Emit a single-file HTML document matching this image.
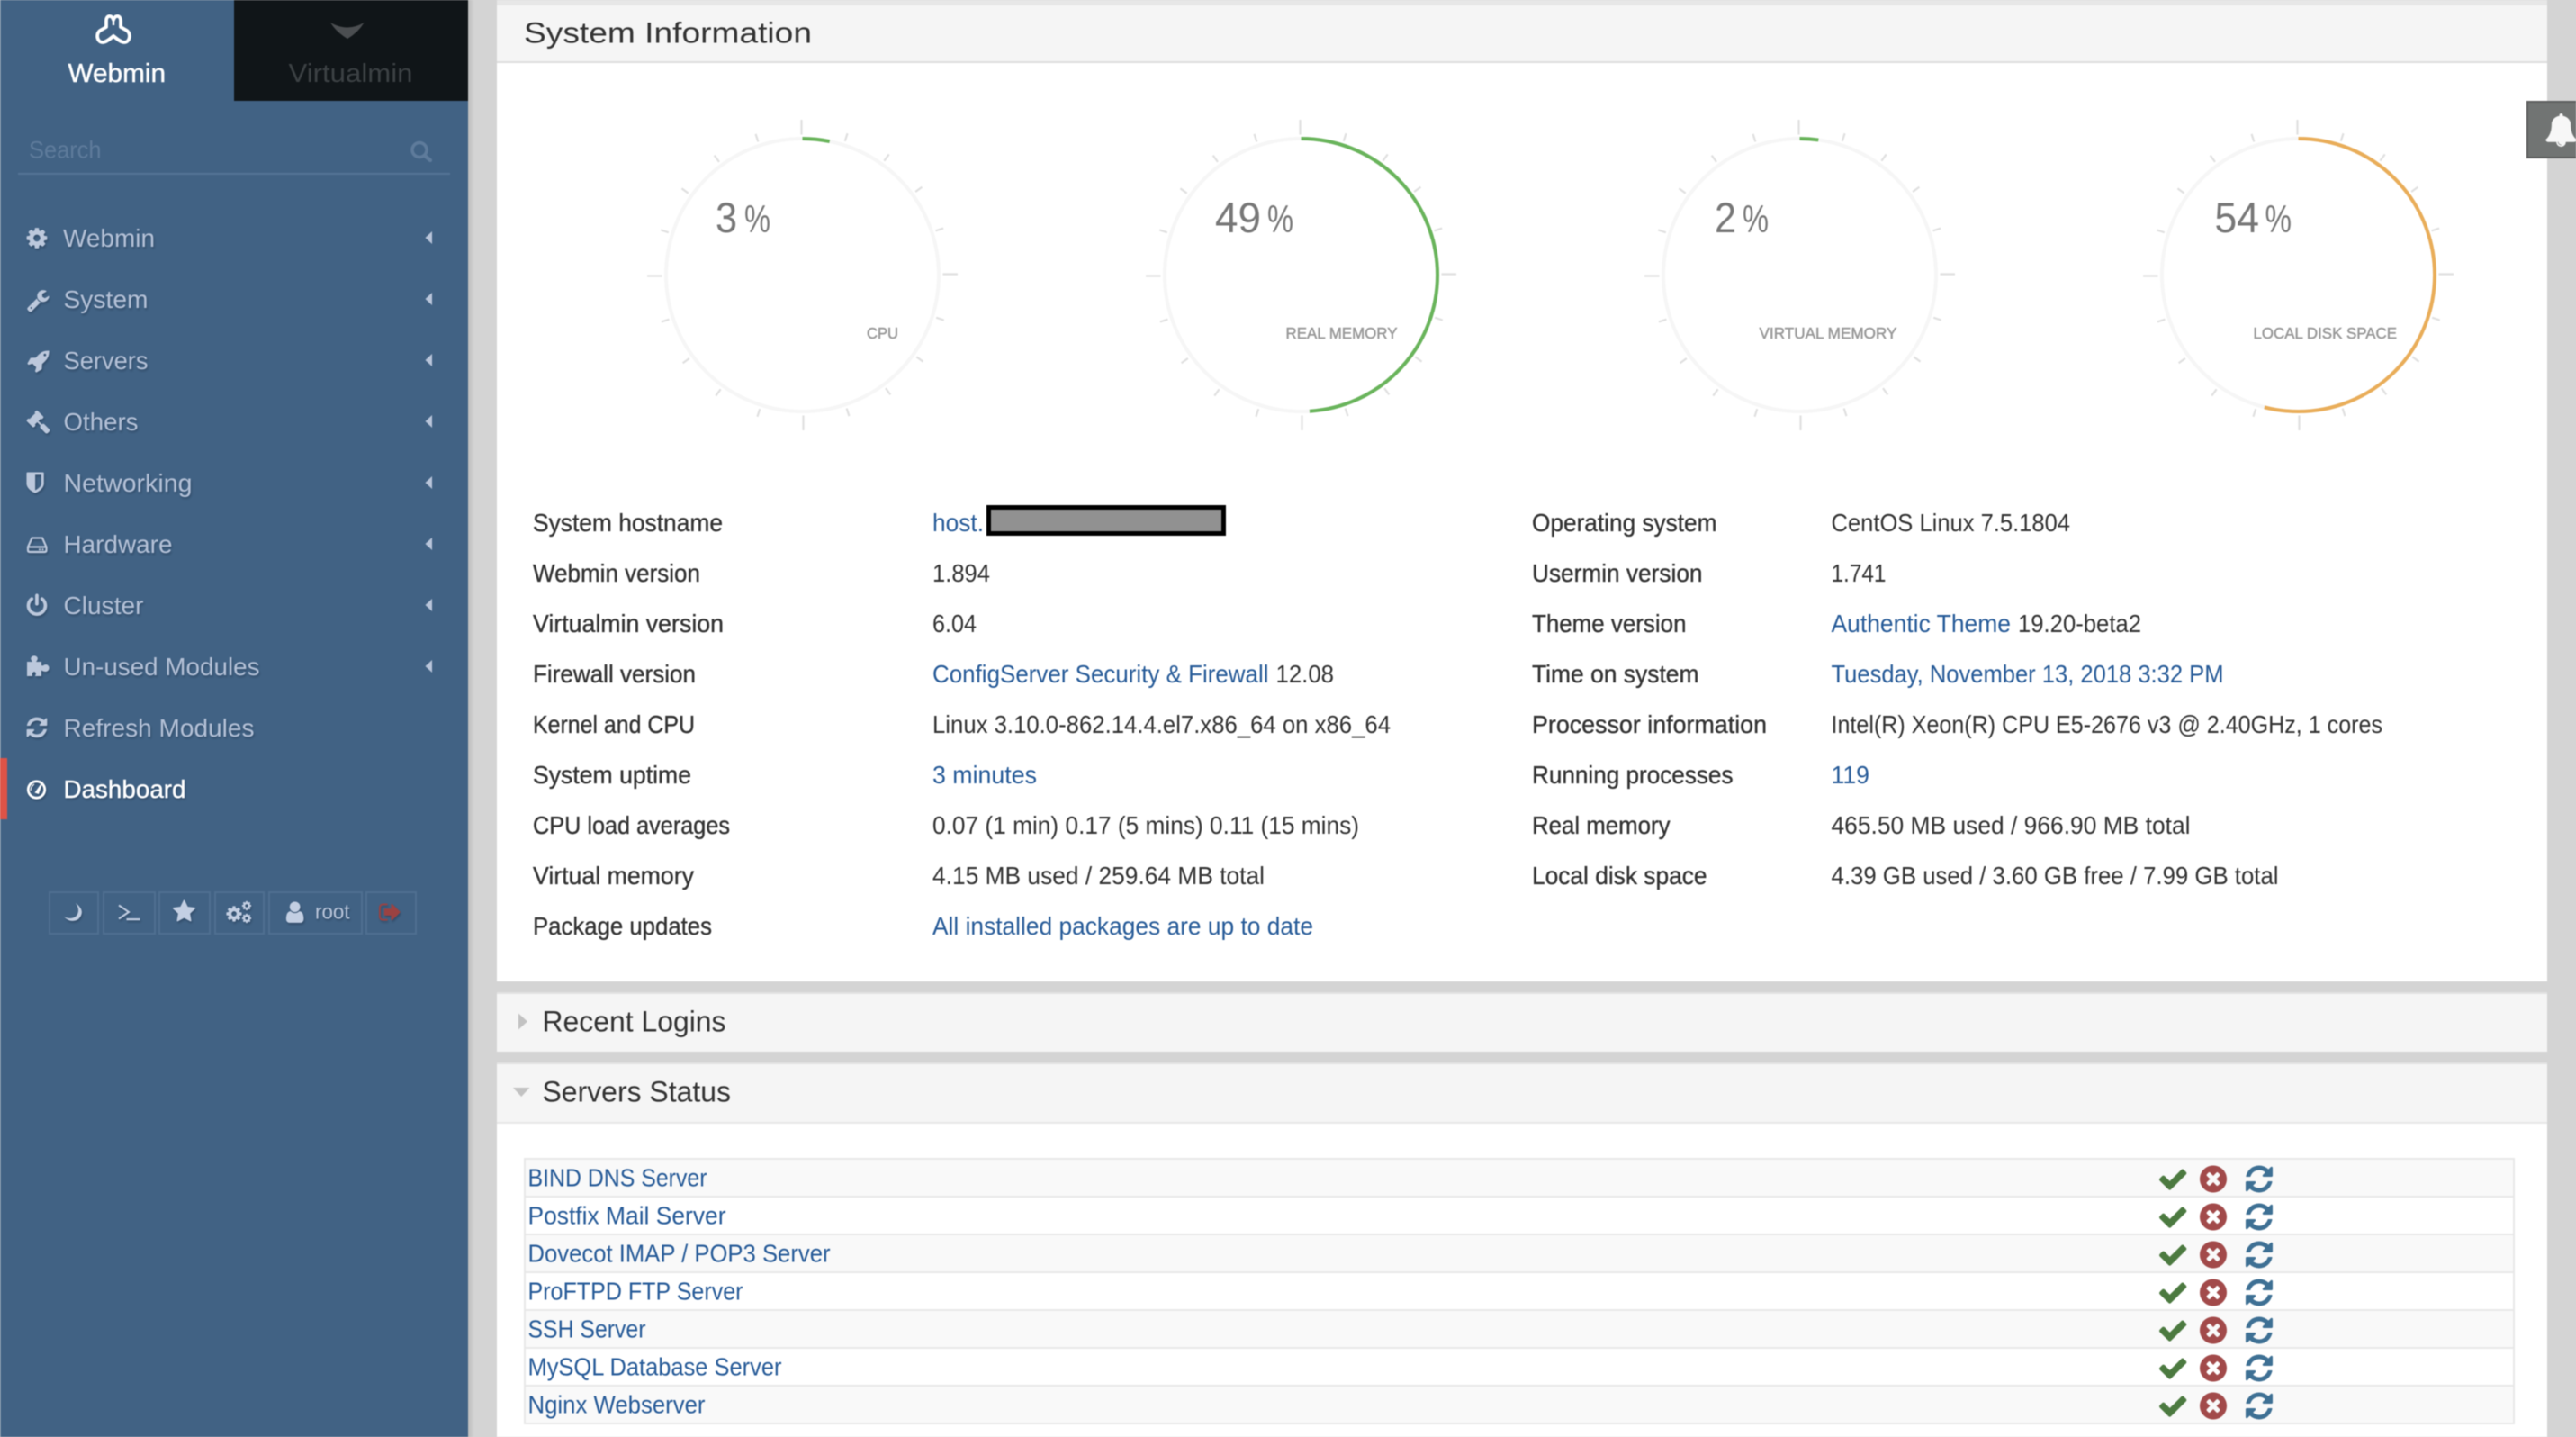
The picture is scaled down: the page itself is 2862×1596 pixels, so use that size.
<!DOCTYPE html>
<html lang="en"><head><meta charset="utf-8"><title>Webmin Dashboard</title>
<style>
html,body{margin:0;padding:0;background:#d4d4d4;overflow:hidden}
svg{display:block;filter:blur(.45px)}
text{font-family:"Liberation Sans",sans-serif;white-space:pre}
.l{font-size:27.5px;fill:#333;stroke:#333;stroke-width:.35px}
.v{font-size:27.5px;fill:#333}
.a{font-size:27.5px;fill:#275b98}
.m{font-size:28px;fill:#b4c1d7}
.t{font-size:32px;fill:#333}
.n{font-size:47px;fill:#777}
.p{font-size:43px;fill:#777}
.g{font-size:17.5px;fill:#999;stroke:#999;stroke-width:.5px}
.i{fill:#bcc8dc}
</style></head><body>
<svg xmlns="http://www.w3.org/2000/svg" width="2862" height="1596" viewBox="0 0 2862 1596">
<defs>
<symbol id="cog" viewBox="0 0 1792 1792"><path d="M1152 896q0-106-75-181t-181-75-181 75-75 181 75 181 181 75 181-75 75-181zm512-109v222q0 12-8 23t-20 13l-185 28q-19 54-39 91 35 50 107 138 10 12 10 25t-9 23q-27 37-99 108t-94 71q-12 0-26-9l-138-108q-44 23-91 38-16 136-29 186-7 28-36 28h-222q-14 0-24.5-8.5t-11.5-21.5l-28-184q-49-16-90-37l-141 107q-10 9-25 9-14 0-25-11-126-114-165-168-7-10-7-23 0-12 8-23 15-21 51-66.5t54-70.5q-27-50-41-99l-183-27q-13-2-21-12.5t-8-23.5v-222q0-12 8-23t19-13l186-28q14-46 39-92-40-57-107-138-10-12-10-24 0-10 9-23 26-36 98.5-107.5t94.5-71.5q13 0 26 10l138 107q44-23 91-38 16-136 29-186 7-28 36-28h222q14 0 24.5 8.5t11.5 21.5l28 184q49 16 90 37l142-107q9-9 24-9 13 0 25 10 129 119 165 170 7 8 7 22 0 12-8 23-15 21-51 66.5t-54 70.5q26 50 41 98l183 28q13 2 21 12.5t8 23.5z"/></symbol>
<symbol id="wrench" viewBox="0 0 1792 1792"><path d="M448 1472q0-26-19-45t-45-19-45 19-19 45 19 45 45 19 45-19 19-45zm644-420l-682 682q-37 37-90 37-52 0-91-37l-106-108q-38-36-38-90 0-53 38-91l681-681q39 98 114.5 173.5t173.5 114.5zm634-435q0 39-23 106-47 134-164.5 217.5t-258.5 83.5q-185 0-316.5-131.5t-131.5-316.5 131.5-316.5 316.5-131.5q58 0 121.5 16.5t107.5 46.5q16 11 16 28t-16 28l-293 169v224l193 107q5-3 79-48.5t135.5-81 70.5-35.5q15 0 23.5 10t8.5 25z"/></symbol>
<symbol id="rocket" viewBox="0 0 1792 1792"><path d="M1504 448q0-40-28-68t-68-28-68 28-28 68 28 68 68 28 68-28 28-68zm224-288q0 249-75.5 430.5t-253.5 360.5q-81 80-195 176l-20 379q-2 16-16 26l-384 224q-7 4-16 4-12 0-23-9l-64-64q-13-14-8-32l85-276-281-281-276 85q-3 1-9 1-14 0-23-9l-64-64q-17-19-5-39l224-384q10-14 26-16l379-20q96-114 176-195 188-187 358-258t431-71q14 0 24 9.5t10 22.5z"/></symbol>
<symbol id="gavel" viewBox="0 0 1792 1792"><path d="M1771 1536q0 53-37 90l-107 108q-39 37-91 37-53 0-90-37l-363-364q-38-36-38-90 0-53 43-96l-256-256-126 126q-14 14-34 14t-34-14q2 2 12.5 12t12.5 13 10 11.5 10 13.5 6 13.5 5.5 16.5 1.5 18q0 38-28 68-3 3-16.5 18t-19 20.5-18.5 16.5-22 15.5-22 9-26 4.5q-40 0-68-28l-408-408q-28-28-28-68 0-13 4.5-26t9-22 15.5-22 16.5-18.5 20.5-19 18-16.5q30-28 68-28 10 0 18 1.5t16.5 5.5 13.5 6 13.5 10 11.5 10 13 12.5 12 12.5q-14-14-14-34t14-34l348-348q14-14 34-14t34 14q-2-2-12.5-12t-12.5-13-10-11.5-10-13.5-6-13.5-5.5-16.5-1.5-18q0-38 28-68 3-3 16.5-18t19-20.5 18.5-16.5 22-15.5 22-9 26-4.5q40 0 68 28l408 408q28 28 28 68 0 13-4.5 26t-9 22-15.5 22-16.5 18.5-20.5 19-18 16.5q-30 28-68 28-10 0-18-1.5t-16.5-5.5-13.5-6-13.5-10-11.5-10-13-12.5-12-12.5q14 14 14 34t-14 34l-126 126 256 256q43-43 96-43 52 0 91 37l363 363q37 39 37 91z"/></symbol>
<symbol id="shield" viewBox="0 0 1792 1792"><path d="M1344 960v-640h-448v1137q119-63 213-137 235-184 235-360zm192-768v768q0 86-33.5 170.5t-83 150-118 127.5-126.5 103-121 77.5-89.5 49.5-42.5 20q-12 6-26 6t-26-6q-16-7-42.5-20t-89.5-49.5-121-77.5-126.5-103-118-127.5-83-150-33.5-170.5v-768q0-26 19-45t45-19h1152q26 0 45 19t19 45z"/></symbol>
<symbol id="power" viewBox="0 0 1792 1792"><path d="M1664 896q0 156-61 298t-164 245-245 164-298 61-298-61-245-164-164-245-61-298q0-182 80.5-343t226.5-270q43-32 95.5-25t83.5 50q32 42 24.5 94.5t-49.5 84.5q-98 74-151.5 181t-53.5 228q0 104 40.5 198.5t109.5 163.5 163.5 109.5 198.5 40.5 198.5-40.5 163.5-109.5 109.5-163.5 40.5-198.5q0-121-53.5-228t-151.5-181q-42-32-49.5-84.5t24.5-94.5q31-43 84-50t95 25q146 109 226.5 270t80.5 343zm-640-768v640q0 52-38 90t-90 38-90-38-38-90v-640q0-52 38-90t90-38 90 38 38 90z"/></symbol>
<symbol id="refresh" viewBox="0 0 1792 1792"><path d="M1639 1056q0 5-1 7-64 268-268 434.5t-478 166.5q-146 0-282.5-55t-243.5-157l-129 129q-19 19-45 19t-45-19-19-45v-448q0-26 19-45t45-19h448q26 0 45 19t19 45-19 45l-137 137q71 66 161 102t187 36q134 0 250-65t186-179q11-17 53-117 8-23 30-23h192q13 0 22.5 9.5t9.5 22.5zm25-800v448q0 26-19 45t-45 19h-448q-26 0-45-19t-19-45 19-45l138-138q-148-137-349-137-134 0-250 65t-186 179q-11 17-53 117-8 23-30 23h-199q-13 0-22.5-9.5t-9.5-22.5v-7q65-268 270-434.5t480-166.5q146 0 284 55.5t245 156.5l130-129q19-19 45-19t45 19 19 45z"/></symbol>
<symbol id="check" viewBox="0 0 1792 1792"><path d="M1671 566q0 40-28 68l-724 724-136 136q-28 28-68 28t-68-28l-136-136-362-362q-28-28-28-68t28-68l136-136q28-28 68-28t68 28l294 295 656-657q28-28 68-28t68 28l136 136q28 28 28 68z"/></symbol>
<symbol id="times" viewBox="0 0 1792 1792"><path d="M1277 1122q0-26-19-45l-181-181 181-181q19-19 19-45 0-27-19-46l-90-90q-19-19-46-19-26 0-45 19l-181 181-181-181q-19-19-45-19-27 0-46 19l-90 90q-19 19-19 46 0 26 19 45l181 181-181 181q-19 19-19 45 0 27 19 46l90 90q19 19 46 19 26 0 45-19l181-181 181 181q19 19 45 19 27 0 46-19l90-90q19-19 19-46zm387-226q0 209-103 385.5t-279.5 279.5-385.5 103-385.5-103-279.5-279.5-103-385.5 103-385.5 279.5-279.5 385.5-103 385.5 103 279.5 279.5 103 385.5z"/></symbol>
<symbol id="star" viewBox="0 0 1792 1792"><path d="M1728 647q0 22-26 48l-363 354 86 500q1 7 1 20 0 21-10.5 35.5t-30.5 14.5q-19 0-40-12l-449-236-449 236q-22 12-40 12-21 0-31.5-14.5t-10.5-35.5q0-6 2-20l86-500-364-354q-25-27-25-48 0-37 56-46l502-73 225-455q19-41 49-41t49 41l225 455 502 73q56 9 56 46z"/></symbol>
<symbol id="user" viewBox="0 0 1792 1792"><path d="M1536 1399q0 109-62.5 187t-150.5 78h-854q-88 0-150.5-78t-62.5-187q0-85 8.5-160.5t31.5-152 58.5-131 94-89 134.5-34.5q131 128 313 128t313-128q76 0 134.5 34.5t94 89 58.5 131 31.5 152 8.5 160.5zm-256-887q0 159-112.5 271.5t-271.5 112.5-271.5-112.5-112.5-271.5 112.5-271.5 271.5-112.5 271.5 112.5 112.5 271.5z"/></symbol>
<symbol id="signout" viewBox="0 0 1792 1792"><path d="M704 1440q0 4 1 20t.5 26.5-3 23.5-10 19.5-20.5 6.5h-320q-119 0-203.5-84.5t-84.5-203.5v-704q0-119 84.5-203.5t203.5-84.5h320q13 0 22.5 9.5t9.5 22.5q0 4 1 20t.5 26.5-3 23.5-10 19.5-20.5 6.5h-320q-66 0-113 47t-47 113v704q0 66 47 113t113 47h312l11.5 1 11.5 3 8 5.5 7 9 2 13.5zm928-544q0 26-19 45l-544 544q-19 19-45 19t-45-19-19-45v-288h-448q-26 0-45-19t-19-45v-384q0-26 19-45t45-19h448v-288q0-26 19-45t45-19 45 19l544 544q19 19 19 45z"/></symbol>
<symbol id="bell" viewBox="0 0 1792 1792"><path d="M912 1696q0-16-16-16-59 0-101.5-42.5t-42.5-101.5q0-16-16-16t-16 16q0 73 51.5 124.5t124.5 51.5q16 0 16-16zm816-288q0 52-38 90t-90 38h-448q0 106-75 181t-181 75-181-75-75-181h-448q-52 0-90-38t-38-90q50-42 91-88t85-119.5 74.5-158.5 50-206 19.5-260q0-152 117-282.5t307-158.5q-8-19-8-39 0-40 28-68t68-28 68 28 28 68q0 20-8 39 190 28 307 158.5t117 282.5q0 139 19.5 260t50 206 74.5 158.5 85 119.5 91 88z"/></symbol>
<g id="ticks" fill="none">
<circle r="151.5" stroke="#f6f6f6" stroke-width="4"/>
<g stroke="#e0e0e0" stroke-width="2.2">
<line x1="-1" y1="-156" x2="-1" y2="-172.5"/>
<line x1="-1" y1="-156" x2="-1" y2="-165" transform="rotate(18)"/>
<line x1="-1" y1="-156" x2="-1" y2="-165" transform="rotate(36)"/>
<line x1="-1" y1="-156" x2="-1" y2="-165" transform="rotate(54)"/>
<line x1="-1" y1="-156" x2="-1" y2="-165" transform="rotate(72)"/>
<line x1="-1" y1="-156" x2="-1" y2="-172.5" transform="rotate(90)"/>
<line x1="-1" y1="-156" x2="-1" y2="-165" transform="rotate(108)"/>
<line x1="-1" y1="-156" x2="-1" y2="-165" transform="rotate(126)"/>
<line x1="-1" y1="-156" x2="-1" y2="-165" transform="rotate(144)"/>
<line x1="-1" y1="-156" x2="-1" y2="-165" transform="rotate(162)"/>
<line x1="-1" y1="-156" x2="-1" y2="-172.5" transform="rotate(180)"/>
<line x1="-1" y1="-156" x2="-1" y2="-165" transform="rotate(198)"/>
<line x1="-1" y1="-156" x2="-1" y2="-165" transform="rotate(216)"/>
<line x1="-1" y1="-156" x2="-1" y2="-165" transform="rotate(234)"/>
<line x1="-1" y1="-156" x2="-1" y2="-165" transform="rotate(252)"/>
<line x1="-1" y1="-156" x2="-1" y2="-172.5" transform="rotate(270)"/>
<line x1="-1" y1="-156" x2="-1" y2="-165" transform="rotate(288)"/>
<line x1="-1" y1="-156" x2="-1" y2="-165" transform="rotate(306)"/>
<line x1="-1" y1="-156" x2="-1" y2="-165" transform="rotate(324)"/>
<line x1="-1" y1="-156" x2="-1" y2="-165" transform="rotate(342)"/>
</g>
</g>
<linearGradient id="sh" x1="0" x2="1" y1="0" y2="0"><stop offset="0" stop-color="#bdbdbd"/><stop offset="1" stop-color="#d4d4d4"/></linearGradient>
</defs>

<!-- background -->
<rect width="2862" height="1596" fill="#d4d4d4"/>
<rect x="520" y="0" width="7" height="1596" fill="url(#sh)"/>

<!-- System Information panel -->
<rect x="552" y="0" width="2278" height="6" fill="#e7e7e7"/>
<rect x="552" y="6" width="2278" height="62" fill="#f5f5f5"/>
<rect x="552" y="68" width="2278" height="2" fill="#dedede"/>
<rect x="552" y="70" width="2278" height="1020" fill="#fff"/>
<text class="t" x="582" y="47.5" textLength="320" lengthAdjust="spacingAndGlyphs">System Information</text>

<!-- gauges -->
<g transform="translate(891.5 305.5)"><use href="#ticks"/><circle r="151.5" fill="none" stroke="#69b45b" stroke-width="4" pathLength="100" stroke-dasharray="3.2 96.8" transform="rotate(-90)"/></g>
<g transform="translate(1445.5 305.5)"><use href="#ticks"/><circle r="151.5" fill="none" stroke="#69b45b" stroke-width="4" pathLength="100" stroke-dasharray="49 51" transform="rotate(-90)"/></g>
<g transform="translate(1999.5 305.5)"><use href="#ticks"/><circle r="151.5" fill="none" stroke="#69b45b" stroke-width="4" pathLength="100" stroke-dasharray="2.2 97.8" transform="rotate(-90)"/></g>
<g transform="translate(2553.5 305.5)"><use href="#ticks"/><circle r="151.5" fill="none" stroke="#e9ad59" stroke-width="4" pathLength="100" stroke-dasharray="54 46" transform="rotate(-90)"/></g>

<text class="n" x="795" y="258" textLength="24" lengthAdjust="spacingAndGlyphs">3</text>
<text class="p" x="827" y="258" textLength="29" lengthAdjust="spacingAndGlyphs">%</text>
<text class="g" x="963" y="376" textLength="35" lengthAdjust="spacingAndGlyphs">CPU</text>

<text class="n" x="1350" y="258" textLength="51" lengthAdjust="spacingAndGlyphs">49</text>
<text class="p" x="1408" y="258" textLength="29" lengthAdjust="spacingAndGlyphs">%</text>
<text class="g" x="1428.5" y="376" textLength="124" lengthAdjust="spacingAndGlyphs">REAL MEMORY</text>

<text class="n" x="1905" y="258" textLength="24" lengthAdjust="spacingAndGlyphs">2</text>
<text class="p" x="1936" y="258" textLength="29" lengthAdjust="spacingAndGlyphs">%</text>
<text class="g" x="1954.5" y="376" textLength="153" lengthAdjust="spacingAndGlyphs">VIRTUAL MEMORY</text>

<text class="n" x="2460.5" y="258" textLength="49.5" lengthAdjust="spacingAndGlyphs">54</text>
<text class="p" x="2516.5" y="258" textLength="29.5" lengthAdjust="spacingAndGlyphs">%</text>
<text class="g" x="2503.5" y="376" textLength="159.5" lengthAdjust="spacingAndGlyphs">LOCAL DISK SPACE</text>

<!-- info table left -->
<text class="l" x="592" y="590" textLength="211" lengthAdjust="spacingAndGlyphs">System hostname</text>
<text class="l" x="592" y="646" textLength="186" lengthAdjust="spacingAndGlyphs">Webmin version</text>
<text class="l" x="592" y="702" textLength="212" lengthAdjust="spacingAndGlyphs">Virtualmin version</text>
<text class="l" x="592" y="758" textLength="181" lengthAdjust="spacingAndGlyphs">Firewall version</text>
<text class="l" x="592" y="814" textLength="180" lengthAdjust="spacingAndGlyphs">Kernel and CPU</text>
<text class="l" x="592" y="870" textLength="176" lengthAdjust="spacingAndGlyphs">System uptime</text>
<text class="l" x="592" y="926" textLength="219" lengthAdjust="spacingAndGlyphs">CPU load averages</text>
<text class="l" x="592" y="982" textLength="179" lengthAdjust="spacingAndGlyphs">Virtual memory</text>
<text class="l" x="592" y="1038" textLength="199" lengthAdjust="spacingAndGlyphs">Package updates</text>

<text class="a" x="1036" y="590" textLength="57" lengthAdjust="spacingAndGlyphs">host.</text>
<rect x="1098.5" y="563.5" width="261" height="29" fill="#919191" stroke="#000" stroke-width="5"/>
<text class="v" x="1036" y="646" textLength="64" lengthAdjust="spacingAndGlyphs">1.894</text>
<text class="v" x="1036" y="702" textLength="49" lengthAdjust="spacingAndGlyphs">6.04</text>
<text class="a" x="1036" y="758" textLength="373.5" lengthAdjust="spacingAndGlyphs">ConfigServer Security &amp; Firewall</text>
<text class="v" x="1417.5" y="758" textLength="64.5" lengthAdjust="spacingAndGlyphs">12.08</text>
<text class="v" x="1036" y="814" textLength="509" lengthAdjust="spacingAndGlyphs">Linux 3.10.0-862.14.4.el7.x86_64 on x86_64</text>
<text class="a" x="1036" y="870" textLength="116" lengthAdjust="spacingAndGlyphs">3 minutes</text>
<text class="v" x="1036" y="926" textLength="474" lengthAdjust="spacingAndGlyphs">0.07 (1 min) 0.17 (5 mins) 0.11 (15 mins)</text>
<text class="v" x="1036" y="982" textLength="369" lengthAdjust="spacingAndGlyphs">4.15 MB used / 259.64 MB total</text>
<text class="a" x="1036" y="1038" textLength="423" lengthAdjust="spacingAndGlyphs">All installed packages are up to date</text>

<!-- info table right -->
<text class="l" x="1702" y="590" textLength="205.5" lengthAdjust="spacingAndGlyphs">Operating system</text>
<text class="l" x="1702" y="646" textLength="189.5" lengthAdjust="spacingAndGlyphs">Usermin version</text>
<text class="l" x="1702" y="702" textLength="171.5" lengthAdjust="spacingAndGlyphs">Theme version</text>
<text class="l" x="1702" y="758" textLength="185.5" lengthAdjust="spacingAndGlyphs">Time on system</text>
<text class="l" x="1702" y="814" textLength="261" lengthAdjust="spacingAndGlyphs">Processor information</text>
<text class="l" x="1702" y="870" textLength="223.5" lengthAdjust="spacingAndGlyphs">Running processes</text>
<text class="l" x="1702" y="926" textLength="153.5" lengthAdjust="spacingAndGlyphs">Real memory</text>
<text class="l" x="1702" y="982" textLength="194.5" lengthAdjust="spacingAndGlyphs">Local disk space</text>

<text class="v" x="2034.5" y="590" textLength="265.5" lengthAdjust="spacingAndGlyphs">CentOS Linux 7.5.1804</text>
<text class="v" x="2034.5" y="646" textLength="61" lengthAdjust="spacingAndGlyphs">1.741</text>
<text class="a" x="2034.5" y="702" textLength="199.5" lengthAdjust="spacingAndGlyphs">Authentic Theme</text>
<text class="v" x="2242" y="702" textLength="137" lengthAdjust="spacingAndGlyphs">19.20-beta2</text>
<text class="a" x="2034.5" y="758" textLength="436" lengthAdjust="spacingAndGlyphs">Tuesday, November 13, 2018 3:32 PM</text>
<text class="v" x="2034.5" y="814" textLength="612.5" lengthAdjust="spacingAndGlyphs">Intel(R) Xeon(R) CPU E5-2676 v3 @ 2.40GHz, 1 cores</text>
<text class="a" x="2034.5" y="870" textLength="42.5" lengthAdjust="spacingAndGlyphs">119</text>
<text class="v" x="2034.5" y="926" textLength="399" lengthAdjust="spacingAndGlyphs">465.50 MB used / 966.90 MB total</text>
<text class="v" x="2034.5" y="982" textLength="497" lengthAdjust="spacingAndGlyphs">4.39 GB used / 3.60 GB free / 7.99 GB total</text>

<!-- Recent Logins -->
<rect x="552" y="1102" width="2278" height="66" fill="#f5f5f5"/>
<rect x="552" y="1102" width="2278" height="2" fill="#e2e2e2"/>
<path d="M576 1125.5L586 1134.5L576 1143.5Z" fill="#c2c2c2"/>
<text class="t" x="602.5" y="1145.5" textLength="204" lengthAdjust="spacingAndGlyphs">Recent Logins</text>

<!-- Servers Status -->
<rect x="552" y="1180" width="2278" height="66" fill="#f5f5f5"/>
<rect x="552" y="1180" width="2278" height="2" fill="#e2e2e2"/>
<rect x="552" y="1246" width="2278" height="2" fill="#e8e8e8"/>
<rect x="552" y="1248" width="2278" height="348" fill="#fff"/>
<path d="M570 1208H588.5L579.2 1218Z" fill="#c2c2c2"/>
<text class="t" x="602.5" y="1223.5" textLength="209.5" lengthAdjust="spacingAndGlyphs">Servers Status</text>

<!-- status table -->
<rect x="583" y="1287" width="2210" height="294" fill="#fff" stroke="#e8e8e8" stroke-width="2"/>
<g fill="#f9f9f9"><rect x="584" y="1288" width="2208" height="40"/><rect x="584" y="1372" width="2208" height="40"/><rect x="584" y="1456" width="2208" height="40"/><rect x="584" y="1540" width="2208" height="40"/></g>
<g fill="#e8e8e8"><rect x="584" y="1328" width="2208" height="2"/><rect x="584" y="1370" width="2208" height="2"/><rect x="584" y="1412" width="2208" height="2"/><rect x="584" y="1454" width="2208" height="2"/><rect x="584" y="1496" width="2208" height="2"/><rect x="584" y="1538" width="2208" height="2"/></g>
<text class="a" x="586.5" y="1317.5" textLength="199" lengthAdjust="spacingAndGlyphs">BIND DNS Server</text>
<text class="a" x="586.5" y="1359.5" textLength="220" lengthAdjust="spacingAndGlyphs">Postfix Mail Server</text>
<text class="a" x="586.5" y="1401.5" textLength="336" lengthAdjust="spacingAndGlyphs">Dovecot IMAP / POP3 Server</text>
<text class="a" x="586.5" y="1443.5" textLength="239" lengthAdjust="spacingAndGlyphs">ProFTPD FTP Server</text>
<text class="a" x="586.5" y="1485.5" textLength="131" lengthAdjust="spacingAndGlyphs">SSH Server</text>
<text class="a" x="586.5" y="1527.5" textLength="282" lengthAdjust="spacingAndGlyphs">MySQL Database Server</text>
<text class="a" x="586.5" y="1569.5" textLength="197" lengthAdjust="spacingAndGlyphs">Nginx Webserver</text>

<g fill="#4c7a40">
<use href="#check" x="2396.7" y="1292" width="35" height="35"/><use href="#check" x="2396.7" y="1334" width="35" height="35"/><use href="#check" x="2396.7" y="1376" width="35" height="35"/><use href="#check" x="2396.7" y="1418" width="35" height="35"/><use href="#check" x="2396.7" y="1460" width="35" height="35"/><use href="#check" x="2396.7" y="1502" width="35" height="35"/><use href="#check" x="2396.7" y="1544" width="35" height="35"/>
</g>
<g fill="#a24a4a">
<use href="#times" x="2441.5" y="1292" width="35" height="35"/><use href="#times" x="2441.5" y="1334" width="35" height="35"/><use href="#times" x="2441.5" y="1376" width="35" height="35"/><use href="#times" x="2441.5" y="1418" width="35" height="35"/><use href="#times" x="2441.5" y="1460" width="35" height="35"/><use href="#times" x="2441.5" y="1502" width="35" height="35"/><use href="#times" x="2441.5" y="1544" width="35" height="35"/>
</g>
<g fill="#3e7094">
<use href="#refresh" x="2492.5" y="1292" width="35" height="35"/><use href="#refresh" x="2492.5" y="1334" width="35" height="35"/><use href="#refresh" x="2492.5" y="1376" width="35" height="35"/><use href="#refresh" x="2492.5" y="1418" width="35" height="35"/><use href="#refresh" x="2492.5" y="1460" width="35" height="35"/><use href="#refresh" x="2492.5" y="1502" width="35" height="35"/><use href="#refresh" x="2492.5" y="1544" width="35" height="35"/>
</g>

<!-- notification bell -->
<rect x="2808" y="113" width="56" height="62" fill="#717473" stroke="#5e5f5f" stroke-width="2"/>
<use href="#bell" x="2827" y="126" width="37" height="37" fill="#f7f7f7"/>

<!-- sidebar -->
<rect x="0" y="0" width="520" height="1596" fill="#416284"/>
<rect x="0" y="0" width="1" height="1596" fill="#6d87a2"/>
<rect x="260" y="0" width="260" height="112" fill="#101518"/>

<path d="M126 22C124 16 118 17 118 23L118 30L111 34C106 38 108 47 114 47C117 47 120 45 126 40C132 45 135 47 138 47C144 47 146 38 141 34L134 30L134 23C134 17 128 16 126 22Z" fill="none" stroke="#fff" stroke-width="3.8" stroke-linejoin="round"/>
<path d="M126 22V28" fill="none" stroke="#fff" stroke-width="2.4"/>
<text x="75.5" y="91" font-size="29" fill="#fff" stroke="#fff" stroke-width=".4" textLength="108.5" lengthAdjust="spacingAndGlyphs">Webmin</text>
<path d="M367 25Q386 36 404.5 25Q398 36 386 43Q374 36 367 25Z" fill="#4b4e51"/>
<text x="320.5" y="91" font-size="29" fill="#3c4144" textLength="138" lengthAdjust="spacingAndGlyphs">Virtualmin</text>

<text x="32" y="175.5" font-size="26.5" fill="#5e7b9b" textLength="80.5" lengthAdjust="spacingAndGlyphs">Search</text>
<circle cx="466" cy="166.5" r="8" fill="none" stroke="#5e7b9b" stroke-width="3.5"/>
<line x1="472" y1="173" x2="478" y2="178" stroke="#5e7b9b" stroke-width="4.2" stroke-linecap="round"/>
<rect x="20" y="192" width="480" height="2" fill="#557495"/>

<g style="filter:drop-shadow(1px 2px 1px rgba(30,50,75,.45))">
<text class="m" x="70" y="274" textLength="102" lengthAdjust="spacingAndGlyphs">Webmin</text>
<text class="m" x="70.5" y="342" textLength="94" lengthAdjust="spacingAndGlyphs">System</text>
<text class="m" x="70.5" y="410" textLength="94" lengthAdjust="spacingAndGlyphs">Servers</text>
<text class="m" x="70.5" y="478" textLength="83" lengthAdjust="spacingAndGlyphs">Others</text>
<text class="m" x="70.5" y="546" textLength="143" lengthAdjust="spacingAndGlyphs">Networking</text>
<text class="m" x="70.5" y="614" textLength="121" lengthAdjust="spacingAndGlyphs">Hardware</text>
<text class="m" x="70.5" y="682" textLength="89" lengthAdjust="spacingAndGlyphs">Cluster</text>
<text class="m" x="70.5" y="750" textLength="218" lengthAdjust="spacingAndGlyphs">Un-used Modules</text>
<text class="m" x="70.5" y="818" textLength="212" lengthAdjust="spacingAndGlyphs">Refresh Modules</text>
<text x="70.5" y="886" font-size="28" fill="#fff" stroke="#fff" stroke-width=".4" textLength="136" lengthAdjust="spacingAndGlyphs">Dashboard</text>

<g class="i">
<use href="#cog" x="27.7" y="251.2" width="26.5" height="26.5"/>
<use href="#wrench" x="29" y="320.2" width="26.5" height="26.5"/>
<use href="#rocket" x="29" y="387.6" width="26.5" height="26.5"/>
<use href="#gavel" x="29" y="455.3" width="26.5" height="26.5"/>
<use href="#shield" x="25.6" y="522.6" width="27" height="27"/>
<use href="#power" x="27.7" y="659.4" width="26.5" height="26.5"/>
<use href="#refresh" x="27.7" y="794.7" width="26.5" height="26.5"/>
</g>
<!-- hdd -->
<path d="M31 607.5L35.5 597.5H47L51.5 607.5V611Q51.5 613 49.5 613H33Q31 613 31 611ZM31 607.5H51.5" fill="none" stroke="#bcc8dc" stroke-width="2.2"/>
<circle cx="44" cy="610.3" r="1.1" fill="#bcc8dc"/><circle cx="47.5" cy="610.3" r="1.1" fill="#bcc8dc"/>
<!-- puzzle -->
<path d="M30 735H36Q33 732 35 729.5Q38 727 41 729.5Q43 732 40 735H46V739Q48 740 49 738.5Q53 737 54.5 741Q55 745 51 746Q48 746 46 744.5V751H39Q41 747 38 746Q35 747 36 751H30Z" fill="#bcc8dc"/>
<!-- dashboard -->
<circle cx="40.5" cy="877" r="9.2" fill="none" stroke="#fff" stroke-width="2.8"/>
<path d="M38.5 880.5L48 867L43 882Z" fill="#fff"/>
<path d="M34 878Q34.5 873 38 871" fill="none" stroke="#fff" stroke-width="1.2"/>
<!-- bottom button icons -->
<path d="M84 1003Q90 1012 84 1018Q78 1022 71 1018Q78 1026 87 1021Q96 1012 84 1003Z" fill="#c3cfe3"/>
<path d="M132 1005.5L143 1013L132 1020.5" fill="none" stroke="#c3cfe3" stroke-width="2"/>
<rect x="140.5" y="1020" width="15" height="2.2" fill="#c3cfe3"/>
<use href="#star" x="191" y="999" width="27" height="27" fill="#c3cfe3"/>
<g fill="#c3cfe3">
<use href="#cog" x="250" y="1005" width="20" height="20"/>
<use href="#cog" x="268" y="1000" width="12" height="12"/>
<use href="#cog" x="268" y="1014" width="12" height="12"/>
<use href="#user" x="314" y="999.5" width="27.3" height="27.3"/>
</g>
<text x="350" y="1020.5" font-size="23" fill="#b9c5da" textLength="38.6" lengthAdjust="spacingAndGlyphs">root</text>
<use href="#signout" x="420" y="999.6" width="26.9" height="26.9" fill="#9b4242"/>
</g>

<g fill="#b9c5da">
<path d="M480 257L472.5 264L480 271Z"/><path d="M480 325L472.5 332L480 339Z"/><path d="M480 393L472.5 400L480 407Z"/><path d="M480 461L472.5 468L480 475Z"/><path d="M480 529L472.5 536L480 543Z"/><path d="M480 597L472.5 604L480 611Z"/><path d="M480 665L472.5 672L480 679Z"/><path d="M480 733L472.5 740L480 747Z"/>
</g>

<rect x="0" y="842" width="8" height="68" fill="#dd5347"/>

<g fill="none" stroke="#4f6f90" stroke-width="2">
<rect x="55" y="991" width="54" height="46"/><rect x="115" y="991" width="57" height="46"/><rect x="177" y="991" width="56" height="46"/><rect x="239" y="991" width="54" height="46"/><rect x="299" y="991" width="103" height="46"/><rect x="407" y="991" width="55" height="46"/>
</g>
</svg>
</body></html>
